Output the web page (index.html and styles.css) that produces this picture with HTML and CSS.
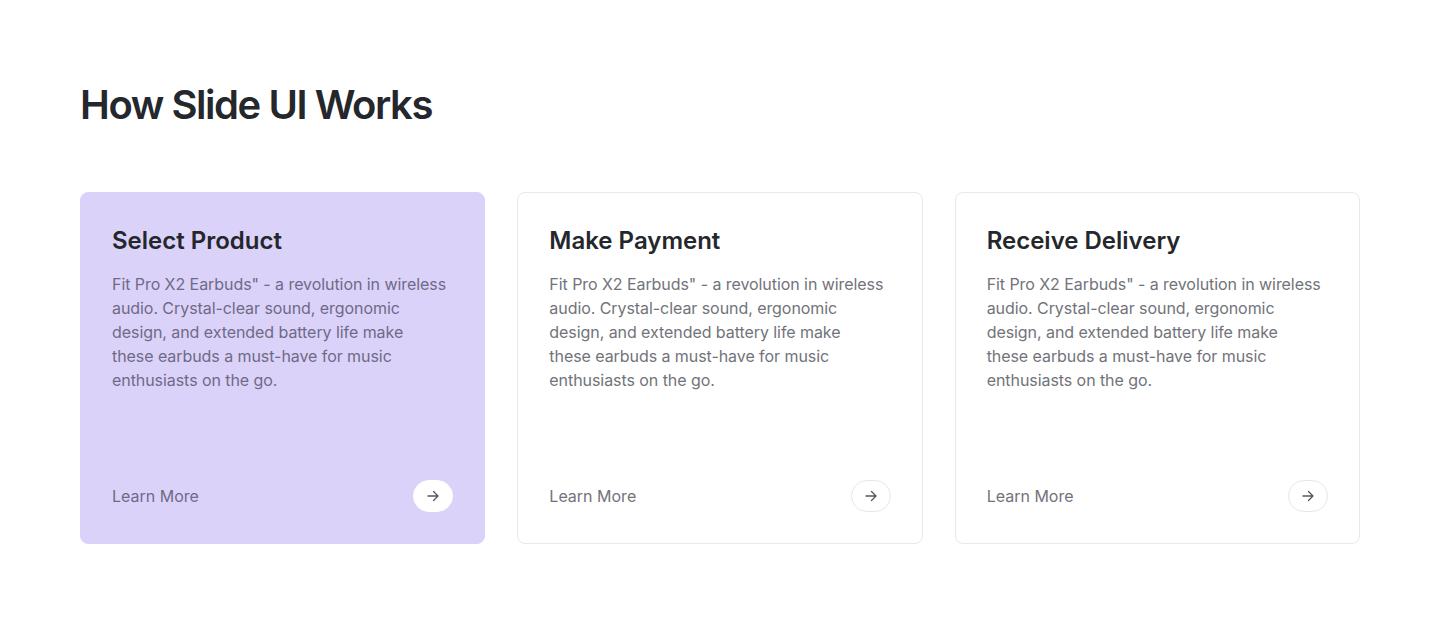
FILE: index.html
```html
<!DOCTYPE html>
<html lang="en">
<head>
<meta charset="utf-8">
<title>How Slide UI Works</title>
<link rel="stylesheet" href="styles.css">
</head>
<body>
<section class="works">
  <h1 class="works-title">How Slide UI Works</h1>
  <div class="cards">
    <article class="card card-active">
      <h2 class="card-title">Select Product</h2>
      <p class="card-text">Fit Pro X2 Earbuds" - a revolution in wireless audio. Crystal-clear sound, ergonomic design, and extended battery life make these earbuds a must-have for music enthusiasts on the go.</p>
      <div class="card-foot">
        <span class="card-link">Learn More</span>
        <span class="arrow-btn"><svg width="14" height="14" viewBox="0 0 14 14" fill="none" stroke="currentColor" stroke-width="1.3" stroke-linecap="round" stroke-linejoin="round"><path d="M2 7h10M7.5 2.5 12 7l-4.5 4.5"/></svg></span>
      </div>
    </article>
    <article class="card">
      <h2 class="card-title">Make Payment</h2>
      <p class="card-text">Fit Pro X2 Earbuds" - a revolution in wireless audio. Crystal-clear sound, ergonomic design, and extended battery life make these earbuds a must-have for music enthusiasts on the go.</p>
      <div class="card-foot">
        <span class="card-link">Learn More</span>
        <span class="arrow-btn"><svg width="14" height="14" viewBox="0 0 14 14" fill="none" stroke="currentColor" stroke-width="1.3" stroke-linecap="round" stroke-linejoin="round"><path d="M2 7h10M7.5 2.5 12 7l-4.5 4.5"/></svg></span>
      </div>
    </article>
    <article class="card">
      <h2 class="card-title">Receive Delivery</h2>
      <p class="card-text">Fit Pro X2 Earbuds" - a revolution in wireless audio. Crystal-clear sound, ergonomic design, and extended battery life make these earbuds a must-have for music enthusiasts on the go.</p>
      <div class="card-foot">
        <span class="card-link">Learn More</span>
        <span class="arrow-btn"><svg width="14" height="14" viewBox="0 0 14 14" fill="none" stroke="currentColor" stroke-width="1.3" stroke-linecap="round" stroke-linejoin="round"><path d="M2 7h10M7.5 2.5 12 7l-4.5 4.5"/></svg></span>
      </div>
    </article>
  </div>
</section>
</body>
</html>
```
FILE: styles.css
```css
* { box-sizing: border-box; }
html, body { margin: 0; padding: 0; background: #ffffff; }
body {
  font-family: Inter, "Noto Sans", sans-serif;
  color: #24272b;
}
.works {
  padding: 81px 80px 0;
}
.works-title {
  margin: 0;
  font-size: 40px;
  line-height: 48px;
  font-weight: 600;
  letter-spacing: -0.036em;
  color: #24272b;
}
.cards {
  margin-top: 63px;
  display: grid;
  grid-template-columns: repeat(3, 1fr);
  gap: 32px;
}
.card {
  height: 352px;
  padding: 32px 31px 31px;
  border: 1px solid #e8e9ec;
  border-radius: 8px;
  background: #ffffff;
  display: flex;
  flex-direction: column;
}
.card-active {
  background: #dbd2fa;
  border-color: #dbd2fa;
}
.card-title {
  margin: 0;
  font-size: 24px;
  line-height: 32px;
  font-weight: 600;
  letter-spacing: 0;
  color: #24272b;
}
.card-text {
  margin: 15px 0 0;
  max-width: 336px;
  font-size: 16px;
  line-height: 24px;
  letter-spacing: -0.004em;
  color: #72737a;
}
.card-active .card-text, .card-active .card-link { color: #6f6a86; }
.card-foot {
  margin-top: auto;
  display: flex;
  align-items: center;
  justify-content: space-between;
}
.card-link {
  font-size: 16px;
  line-height: 24px;
  color: #72737a;
}
.arrow-btn {
  width: 40px;
  height: 32px;
  border-radius: 16px;
  border: 1px solid #e6e7ea;
  background: #ffffff;
  display: flex;
  align-items: center;
  justify-content: center;
  color: #55565c;
}
.card-active .arrow-btn { border-color: #ffffff; }
```
